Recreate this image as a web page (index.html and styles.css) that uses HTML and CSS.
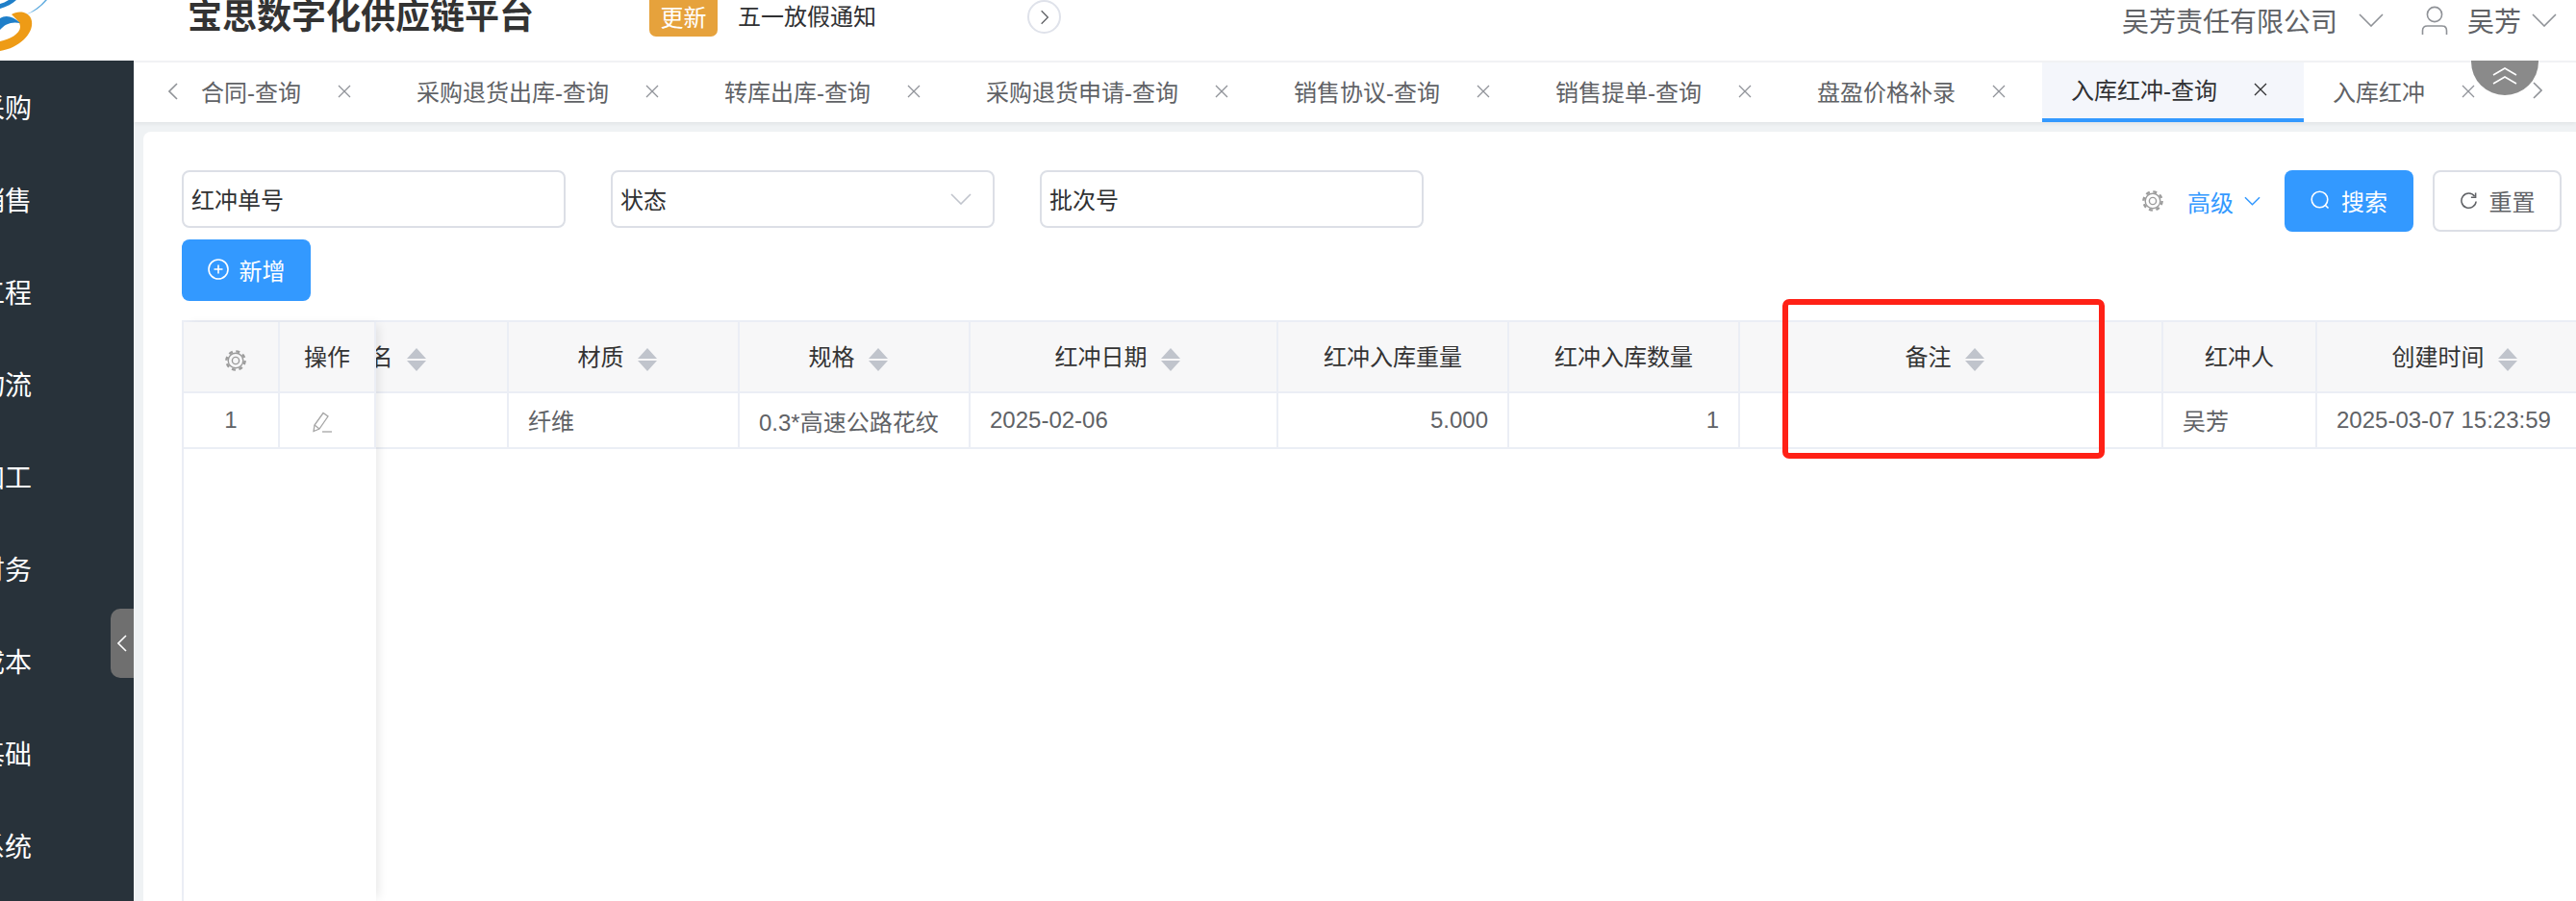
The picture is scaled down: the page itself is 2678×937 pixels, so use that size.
FILE: index.html
```html
<!DOCTYPE html>
<html lang="zh-CN">
<head>
<meta charset="utf-8">
<title>宝思数字化供应链平台</title>
<link rel="stylesheet" href="styles.css">
</head>
<body>
<header class="topbar">
  <svg class="logo" viewBox="0 0 50 53" width="50" height="53">
    <path fill="#ee9b16" d="M12 15C18 11 31 11 33 22C35 35 20 50 0 53V43C10 41 21 35 21 28C21 23 17 20 12 15Z"/>
    <path fill="#1f7fc9" d="M0 19C6 15 14 17 21 24C12 22 5 25 0 31Z"/>
    <path fill="#1f7fc9" d="M0 9C7 7 13 4 17 0H9C6 2 3 3 0 4Z"/>
    <path fill="#5aa9de" d="M47 0C41 7 34 12 27 15C35 13 43 7 49 0Z"/>
  </svg>
  <h1 class="brand">宝思数字化供应链平台</h1>
  <span class="badge">更新</span>
  <span class="notice">五一放假通知</span>
  <span class="notice-next"><svg viewBox="0 0 12 20" width="10" height="18"><path d="M2 2l8 8-8 8" class="line dark"/></svg></span>
  <div class="account">
    <span class="company">吴芳责任有限公司</span>
    <svg class="caret-lg" viewBox="0 0 26 14" width="26" height="14"><path d="M1 1l12 12L25 1" class="line grey"/></svg>
    <svg class="user-icon" viewBox="0 0 28 30" width="28" height="30"><circle cx="14" cy="9" r="7.6" class="line grey"/><path d="M1.5 30v-4c0-3 2-5 5-5h15c3 0 5 2 5 5v4" class="line grey"/></svg>
    <span class="username">吴芳</span>
    <svg class="caret-sm" viewBox="0 0 26 14" width="26" height="14"><path d="M1 1l12 12L25 1" class="line grey"/></svg>
  </div>
</header>

<div class="main">
  <nav class="sidebar">
    <div class="nav-item">采购</div>
    <div class="nav-item">销售</div>
    <div class="nav-item">工程</div>
    <div class="nav-item">物流</div>
    <div class="nav-item">加工</div>
    <div class="nav-item">财务</div>
    <div class="nav-item">成本</div>
    <div class="nav-item">基础</div>
    <div class="nav-item">系统</div>
    <div class="collapse"><svg viewBox="0 0 10 18" width="10" height="18"><path d="M9 1L1 9l8 8" class="line white"/></svg></div>
  </nav>

  <div class="workspace">
    <div class="tabbar">
      <svg class="tab-prev" viewBox="0 0 10 18" width="10" height="18"><path d="M9 1L1 9l8 8" class="line grey"/></svg>
      <div class="tab"><span>合同-查询</span><svg class="close" viewBox="0 0 14 14" width="14" height="14"><path d="M1 1l12 12M13 1L1 13"/></svg></div>
      <div class="tab"><span>采购退货出库-查询</span><svg class="close" viewBox="0 0 14 14" width="14" height="14"><path d="M1 1l12 12M13 1L1 13"/></svg></div>
      <div class="tab"><span>转库出库-查询</span><svg class="close" viewBox="0 0 14 14" width="14" height="14"><path d="M1 1l12 12M13 1L1 13"/></svg></div>
      <div class="tab"><span>采购退货申请-查询</span><svg class="close" viewBox="0 0 14 14" width="14" height="14"><path d="M1 1l12 12M13 1L1 13"/></svg></div>
      <div class="tab"><span>销售协议-查询</span><svg class="close" viewBox="0 0 14 14" width="14" height="14"><path d="M1 1l12 12M13 1L1 13"/></svg></div>
      <div class="tab"><span>销售提单-查询</span><svg class="close" viewBox="0 0 14 14" width="14" height="14"><path d="M1 1l12 12M13 1L1 13"/></svg></div>
      <div class="tab"><span>盘盈价格补录</span><svg class="close" viewBox="0 0 14 14" width="14" height="14"><path d="M1 1l12 12M13 1L1 13"/></svg></div>
      <div class="tab active"><span>入库红冲-查询</span><svg class="close" viewBox="0 0 14 14" width="14" height="14"><path d="M1 1l12 12M13 1L1 13"/></svg></div>
      <div class="tab"><span>入库红冲</span><svg class="close" viewBox="0 0 14 14" width="14" height="14"><path d="M1 1l12 12M13 1L1 13"/></svg></div>
    </div>

    <section class="page">
      <div class="filters">
        <div class="field">红冲单号</div>
        <div class="field">状态<svg class="field-caret" viewBox="0 0 22 12" width="22" height="12"><path d="M1 1l10 10L21 1" class="line pale"/></svg></div>
        <div class="field">批次号</div>
        <div class="actions">
          <svg class="gear" viewBox="0 0 22 22" width="22" height="22"><circle cx="11" cy="11" r="7.8" class="gear-ring"/><circle cx="11" cy="11" r="9.6" class="gear-teeth"/><circle cx="11" cy="11" r="3.6" class="gear-ring"/></svg>
          <span class="advanced">高级</span>
          <svg class="advanced-caret" viewBox="0 0 18 10" width="17" height="10"><path d="M1 1l8 8 8-8" class="line blue"/></svg>
          <button class="btn primary search" type="button"><svg viewBox="0 0 20 20" width="20" height="20"><circle cx="9.500" cy="9.500" r="8.300" class="line white"/><path d="M15.500 15.500l3 3" class="line white"/></svg>搜索</button>
          <button class="btn plain" type="button"><svg viewBox="0 0 20 20" width="19" height="19"><path d="M16.500 5.500A8 8 0 1 0 18 11" class="line dark"/><path d="M17.500 1.500v5h-5" class="reset-arrow"/></svg>重置</button>
        </div>
      </div>
      <button class="btn primary add" type="button"><svg viewBox="0 0 22 22" width="22" height="22"><circle cx="11" cy="11" r="10" class="line white"/><path d="M11 6.500v9M6.500 11h9" class="line white"/></svg>新增</button>

      <div class="grid">
        <div class="grid-fixed">
          <table class="tbl fixed-tbl">
            <thead>
              <tr>
                <th class="gear-cell"><svg class="gear" viewBox="0 0 22 22" width="22" height="22"><circle cx="11" cy="11" r="7.8" class="gear-ring"/><circle cx="11" cy="11" r="9.6" class="gear-teeth"/><circle cx="11" cy="11" r="3.6" class="gear-ring"/></svg></th>
                <th>操作</th>
              </tr>
            </thead>
            <tbody>
              <tr>
                <td class="center">1</td>
                <td class="center"><svg class="pencil" viewBox="0 0 20 22" width="20" height="22"><path d="M1 20.500l1-6.500L11 1.500l5 3.500-9 13z"/><path d="M2 14l5 4"/><path d="M10 21h10"/></svg></td>
              </tr>
            </tbody>
          </table>
        </div>
        <div class="grid-scroll">
          <table class="tbl scroll-tbl">
            <colgroup>
              <col class="c240"><col class="c240"><col class="c240"><col class="c320"><col class="c240"><col class="c240"><col class="c440"><col class="c160"><col class="c300">
            </colgroup>
            <thead>
              <tr>
                <th>品名<svg class="sort" viewBox="0 0 20 24" width="20" height="24"><path d="M10 0l10 11H0zM0 13h20L10 24z"/></svg></th>
                <th>材质<svg class="sort" viewBox="0 0 20 24" width="20" height="24"><path d="M10 0l10 11H0zM0 13h20L10 24z"/></svg></th>
                <th>规格<svg class="sort" viewBox="0 0 20 24" width="20" height="24"><path d="M10 0l10 11H0zM0 13h20L10 24z"/></svg></th>
                <th>红冲日期<svg class="sort" viewBox="0 0 20 24" width="20" height="24"><path d="M10 0l10 11H0zM0 13h20L10 24z"/></svg></th>
                <th>红冲入库重量</th>
                <th>红冲入库数量</th>
                <th>备注<svg class="sort" viewBox="0 0 20 24" width="20" height="24"><path d="M10 0l10 11H0zM0 13h20L10 24z"/></svg></th>
                <th>红冲人</th>
                <th>创建时间<svg class="sort" viewBox="0 0 20 24" width="20" height="24"><path d="M10 0l10 11H0zM0 13h20L10 24z"/></svg></th>
              </tr>
            </thead>
            <tbody>
              <tr>
                <td></td>
                <td class="cjk">纤维</td>
                <td>0.3*高速公路花纹</td>
                <td>2025-02-06</td>
                <td class="num">5.000</td>
                <td class="num">1</td>
                <td></td>
                <td class="cjk">吴芳</td>
                <td>2025-03-07 15:23:59</td>
              </tr>
            </tbody>
          </table>
        </div>
      </div>
    </section>
  </div>
</div>

<svg class="tab-next" viewBox="0 0 10 18" width="10" height="18"><path d="M1 1l8 8-8 8" class="line grey"/></svg>
<div class="fold"><svg viewBox="0 0 26 18" width="26" height="18"><path d="M1 8l12-7 12 7M1 17l12-7 12 7" class="line white"/></svg></div>
<div class="annotation"></div>
</body>
</html>
```

FILE: styles.css
```css
* { box-sizing: border-box; }
html, body { margin: 0; height: 100%; overflow: hidden; }
body {
  position: relative;
  display: flex;
  flex-direction: column;
  background: #fff;
  color: #303133;
  font-family: "Liberation Sans", "Noto Sans CJK SC", sans-serif;
  font-size: 24px;
}

.line { fill: none; stroke-width: 1.6; }
.line.grey { stroke: #8f9297; }
.line.dark { stroke: #606266; }
.line.white { stroke: #fff; }
.line.pale { stroke: #c0c4cc; }
.line.blue { stroke: #3399ff; }

/* top bar */
.topbar {
  flex: none;
  height: 63px;
  display: flex;
  align-items: flex-start;
}
.logo { flex: none; }
.brand {
  margin: 0 0 0 145px;
  font-size: 36px;
  line-height: 36px;
  font-weight: 700;
  color: #333;
  white-space: nowrap;
}
.badge {
  margin-left: 120px;
  width: 71px;
  height: 38px;
  border-radius: 0 0 7px 7px;
  background: #e6a23c;
  color: #fff;
  text-align: center;
  line-height: 37px;
}
.notice { margin-left: 21px; line-height: 36px; white-space: nowrap; }
.notice-next {
  margin-left: 157px;
  width: 35px;
  height: 35px;
  border: 2px solid #dfe2ea;
  border-radius: 50%;
  display: flex;
  align-items: center;
  justify-content: center;
}
.account {
  margin-left: auto;
  padding: 1px 20px 0 0;
  display: flex;
  align-items: center;
  height: 40px;
  color: #606266;
  font-size: 28px;
  white-space: nowrap;
}
.caret-lg { margin-left: 22px; }
.user-icon { margin-left: 39px; }
.username { margin-left: 20px; }
.caret-sm { margin-left: 11px; }

/* body */
.main { flex: 1; min-height: 0; display: flex; }
.sidebar {
  position: relative;
  flex: none;
  width: 139px;
  background: #28323a;
  color: #fff;
  font-size: 28px;
  overflow: hidden;
}
.nav-item {
  height: 96px;
  padding-right: 106px;
  display: flex;
  align-items: center;
  justify-content: flex-end;
  white-space: nowrap;
}
.collapse {
  position: absolute;
  top: 570px;
  right: 0;
  width: 24px;
  height: 72px;
  border-radius: 10px 0 0 10px;
  background: #6f6f6f;
  display: flex;
  align-items: center;
  justify-content: center;
}

.workspace {
  flex: 1;
  min-width: 0;
  display: flex;
  flex-direction: column;
  background: #eff2f4;
}

/* tabs */
.tabbar {
  flex: none;
  height: 64px;
  display: flex;
  background: #fff;
  border-top: 2px solid #f1f2f4;
  box-shadow: 0 2px 4px rgba(0, 0, 0, .06);
  overflow: hidden;
  color: #606266;
  white-space: nowrap;
}
.tab-prev { flex: none; align-self: center; margin: 0 -6px 2px 36px; }
.tab {
  flex: none;
  height: 62px;
  padding: 0 38px 2px 30px;
  display: flex;
  align-items: center;
  gap: 38px;
}
.tab span { margin-bottom: 2px; }
.close { fill: none; stroke: #909399; stroke-width: 1.3; }
.tab.active {
  height: 64px;
  margin-top: -2px;
  padding-bottom: 0;
  background: #f4f6fb;
  border-bottom: 4px solid #3399ff;
  color: #303133;
}
.tab.active .close { stroke: #303133; }

.tab-next { position: absolute; top: 85px; left: 2633px; }
.fold {
  position: absolute;
  top: 63px;
  left: 2569px;
  width: 70px;
  height: 36px;
  border-radius: 0 0 35px 35px;
  background: #8a8a8a;
  display: flex;
  justify-content: center;
  padding-top: 7px;
}

/* page card */
.page {
  flex: 1;
  min-height: 0;
  margin: 10px 0 0 10px;
  padding: 40px 15px 0 40px;
  background: #fff;
  border-radius: 8px 0 0 0;
  display: flex;
  flex-direction: column;
  align-items: flex-start;
}
.filters {
  flex: none;
  width: 100%;
  display: flex;
  align-items: flex-start;
  gap: 47px;
}
.field {
  flex: none;
  width: 399px;
  height: 60px;
  padding: 0 22px 2px 8px;
  border: 2px solid #dcdfe6;
  border-radius: 8px;
  display: flex;
  align-items: center;
  justify-content: space-between;
}
.field-caret { margin-top: 2px; }
.actions {
  margin-left: auto;
  height: 64px;
  display: flex;
  align-items: center;
}
.gear-ring { fill: none; stroke: #9c9c9c; stroke-width: 1.4; }
.gear-teeth { fill: none; stroke: #9c9c9c; stroke-width: 2.4; stroke-dasharray: 4 3.54; }
.advanced { margin-left: 25px; color: #3399ff; }
.advanced-caret { margin: 0 25px 0 11px; }
.btn {
  flex: none;
  width: 134px;
  height: 64px;
  padding: 0 0 2px;
  border-radius: 8px;
  display: flex;
  align-items: center;
  justify-content: center;
  gap: 12px;
  font: inherit;
}
.btn.primary { background: #3399ff; border: 0; color: #fff; }
.btn.plain { margin-left: 20px; background: #fff; border: 2px solid #dcdfe6; color: #606266; }
.reset-arrow { fill: none; stroke: #606266; stroke-width: 1.6; }
.add { margin-top: 8px; gap: 11px; }

/* table */
.grid {
  flex: 1;
  min-height: 0;
  width: calc(100% + 15px);
  margin-top: 20px;
  border-top: 2px solid #ebeef5;
  border-left: 2px solid #ebeef5;
  display: flex;
}
.grid-fixed {
  position: relative;
  z-index: 1;
  flex: none;
  width: 200px;
  background: #fff;
  box-shadow: 5px 0 10px -3px rgba(0, 0, 0, .1);
}
.grid-scroll { flex: 1; min-width: 0; overflow: hidden; }
.tbl {
  border-collapse: separate;
  border-spacing: 0;
  table-layout: fixed;
}
.fixed-tbl { width: 200px; }
.scroll-tbl { width: 2220px; margin-left: -102px; }
.c160 { width: 160px; }
.c240 { width: 240px; }
.c300 { width: 300px; }
.c320 { width: 320px; }
.c440 { width: 440px; }
.tbl th, .tbl td {
  border-right: 2px solid #ebeef5;
  border-bottom: 2px solid #ebeef5;
  padding: 0 20px;
  white-space: nowrap;
  font-size: 24px;
}
.tbl th {
  height: 74px;
  padding-bottom: 3px;
  background: #f7f7f8;
  color: #333;
  font-weight: 400;
  text-align: center;
}
.fixed-tbl th { padding: 0 0 3px; }
.tbl td { height: 58px; color: #606266; }
.tbl td.center { padding: 0; text-align: center; }
.tbl td.num { text-align: right; }
.tbl td.cjk { padding-bottom: 2px; }
.sort {
  margin: 0 13px 0 14px;
  vertical-align: middle;
  fill: #c0c4cc;
}
.gear-cell .gear { position: relative; left: 5px; top: 4px; vertical-align: middle; }
.pencil { fill: none; stroke: #a5a5a5; stroke-width: 1.3; vertical-align: middle; margin-left: -10px; }

/* red annotation drawn on the screenshot */
.annotation {
  position: absolute;
  top: 311px;
  left: 1853px;
  width: 335px;
  height: 166px;
  border: 6px solid #ff2116;
  border-radius: 7px;
}
```
